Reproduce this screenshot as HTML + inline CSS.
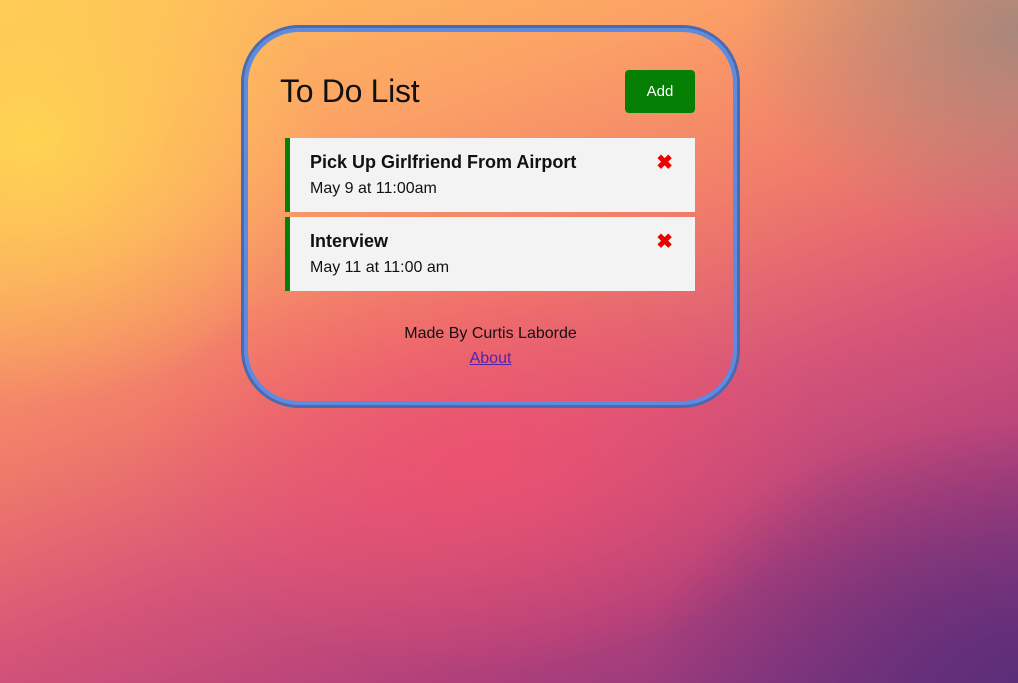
<!DOCTYPE html>
<html><head><style>
html,body{margin:0;width:1018px;height:683px;overflow:hidden;font-family:"Liberation Sans",sans-serif;}
body{position:relative;background:
radial-gradient(ellipse 420px 380px at 30px 140px,rgba(255,215,80,.9),rgba(255,215,80,0) 70%),
radial-gradient(ellipse 400px 300px at 1018px 30px,rgba(160,135,125,.9),rgba(160,135,125,0) 70%),
radial-gradient(ellipse 500px 350px at 1018px 683px,rgba(90,45,120,.95),rgba(90,45,120,0) 75%),
radial-gradient(ellipse 500px 300px at 480px 460px,rgba(240,80,110,.8),rgba(240,80,110,0) 70%),
linear-gradient(160deg,#ffc45a 0%,#fba066 25%,#f07a6a 45%,#d65578 62%,#b1407a 80%,#7a3480 100%);}
.box{position:absolute;left:241px;top:25px;width:493px;height:377px;border:3px solid #4a6ab0;border-radius:58px;}
.box:before{content:"";position:absolute;inset:0;border:4px solid #5c8be0;border-radius:55px;}
h1{position:absolute;left:36px;top:45px;margin:0;font-size:32px;font-weight:normal;color:#111;letter-spacing:-0.3px;}
.add{position:absolute;left:381px;top:42px;width:70px;height:43px;background:#058005;border-radius:4px;color:#fff;font-size:15px;text-align:center;line-height:43px;}
.item{position:absolute;left:41px;width:405px;height:74px;background:#f3f3f3;border-left:5px solid #058005;}
.t{position:absolute;left:20px;top:14px;font-size:18px;font-weight:bold;color:#111;}
.d{position:absolute;left:20px;top:42px;font-size:16px;color:#111;}
.x{position:absolute;right:22px;top:12px;color:#e00;font-size:20px;font-weight:bold;}
.foot{position:absolute;left:0;width:493px;text-align:center;font-size:16px;color:#111;}
</style></head><body>
<div class="box">
<h1>To Do List</h1>
<div class="add">Add</div>
<div class="item" style="top:110px"><div class="t">Pick Up Girlfriend From Airport</div><div class="d">May 9 at 11:00am</div><div class="x">✖</div></div>
<div class="item" style="top:189px"><div class="t">Interview</div><div class="d">May 11 at 11:00 am</div><div class="x">✖</div></div>
<div class="foot" style="top:297px">Made By Curtis Laborde</div>
<div class="foot" style="top:322px"><span style="color:#5522aa;text-decoration:underline">About</span></div>
</div>
</body></html>
